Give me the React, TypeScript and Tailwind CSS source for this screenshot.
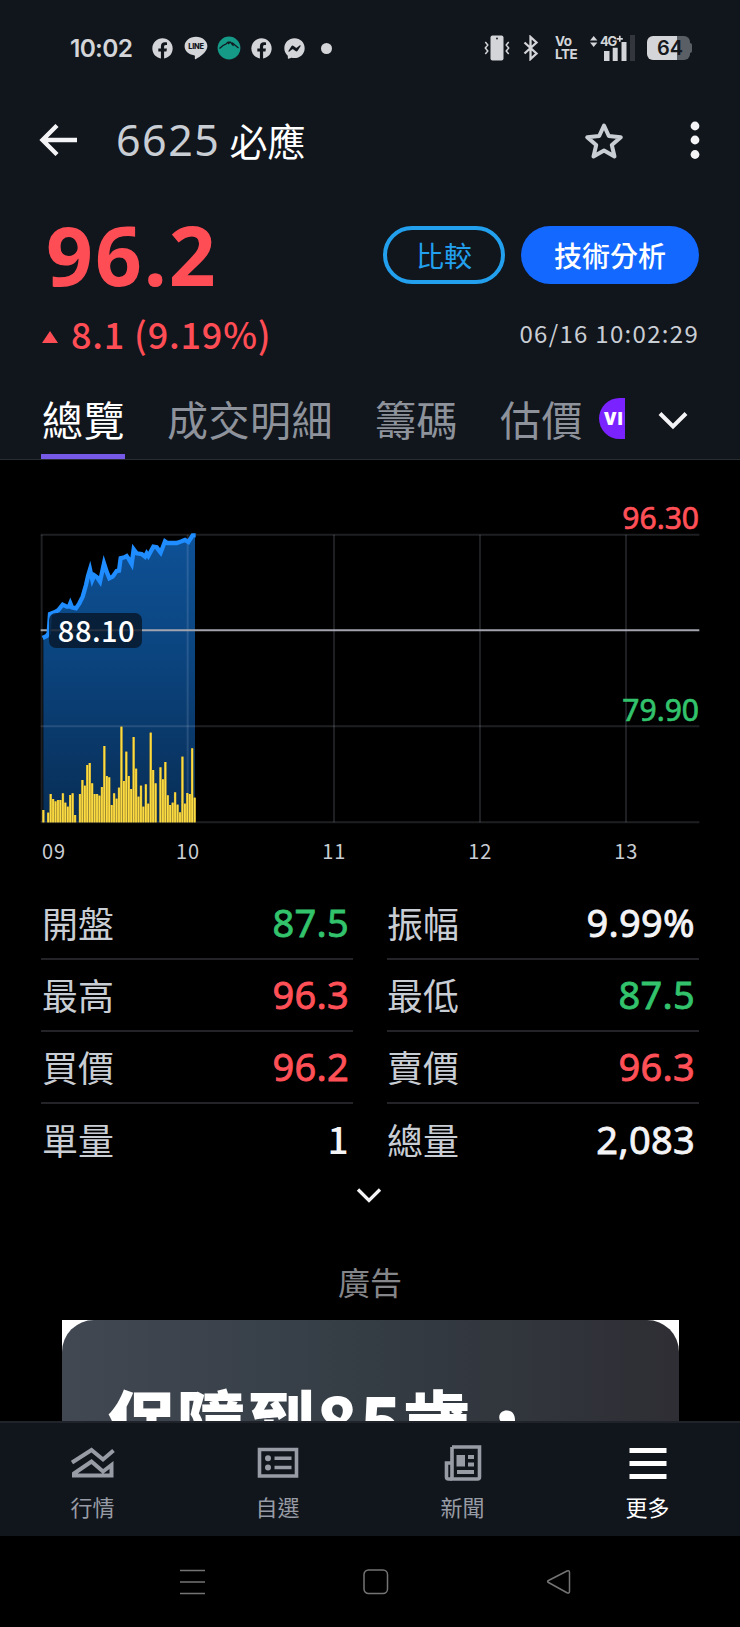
import { FaFacebook, FaFacebookMessenger } from 'react-icons/fa';

const NUM = "font-['Noto_Sans','Noto_Sans_CJK_TC',sans-serif]";

type Tone = 'up' | 'down' | 'flat';

const TONES: Record<Tone, string> = {
  up: 'text-[#ff5058]',
  down: 'text-[#32c36c]',
  flat: 'text-[#f4f4f6]',
};

const QUOTES: { label: string; value: string; tone: Tone }[][] = [
  [
    { label: '開盤', value: '87.5', tone: 'down' },
    { label: '最高', value: '96.3', tone: 'up' },
    { label: '買價', value: '96.2', tone: 'up' },
    { label: '單量', value: '1', tone: 'flat' },
  ],
  [
    { label: '振幅', value: '9.99%', tone: 'flat' },
    { label: '最低', value: '87.5', tone: 'down' },
    { label: '賣價', value: '96.3', tone: 'up' },
    { label: '總量', value: '2,083', tone: 'flat' },
  ],
];

// one point per move, chart units (3 per pixel)
const PRICE_LINE =
  '38,414 50,408 56,400 60,342 75,336 85,330 98,314 110,320 117,320 121,310 126,322 138,325 148,310 158,290 168,255 174,228 180,208 187,240 193,226 201,232 210,245 222,190 230,215 238,235 248,230 260,213 267,212 272,175 283,172 290,168 297,178 305,192 311,148 320,160 335,162 345,170 350,160 355,168 370,140 380,142 392,158 405,124 412,129 440,129 455,124 465,120 475,126 488,106 497,106';

// volume per minute from 09:00, 0 = no trade
const VOLUMES = [
  37, 0, 29, 85, 70, 63, 67, 67, 87, 59, 47, 82, 87, 22, 0, 85, 127, 110, 172, 178, 117, 85, 85, 80, 106, 229, 139,
  135, 52, 87, 71, 104, 287, 124, 212, 139, 100, 256, 161, 77, 110, 47, 114, 56, 269, 157, 117, 0, 165, 129, 181, 81,
  52, 59, 90, 53, 30, 197, 56, 88, 85, 222, 74,
];

const HOURS = [
  { label: '09', x: 35 },
  { label: '10', x: 473 },
  { label: '11', x: 912 },
  { label: '12', x: 1350 },
  { label: '13', x: 1788 },
];

function StatusBar() {
  return (
    <div className="flex h-[96px] items-center justify-between pl-[70px] pr-[48px] text-[#d4d5d8]">
      <div className="flex items-center">
        <span className="w-[82px] font-['Inter',sans-serif] text-[24.5px] font-semibold leading-none tracking-[-0.7px]">
          10:02
        </span>
        <FaFacebook className="size-[21px]" />
        <svg viewBox="0 0 24 24" className="ml-[11px] size-[24px]">
          <path
            d="M12 .8C5.700.8.6 5 .6 10.200c0 4.600 4 8.300 9.400 9 1.100.2 1 .8.800 3.200 0 .8.500 1 1.200.5 3.700-2 11.400-7 11.400-12.700C23.400 5 18.300.8 12 .8z"
            fill="currentColor"
          />
          <text x="12" y="13" textAnchor="middle" fontSize="7.4" fontWeight="800" fontFamily="Inter, sans-serif" letterSpacing="-0.2" fill="#11151c">
            LINE
          </text>
        </svg>
        <svg viewBox="0 0 24 24" className="ml-[9px] size-[24px]">
          <circle cx="12" cy="12" r="11.4" fill="#159a88" />
          <path
            d="M2.500 12.500 6 9.500 9 8l2-2 2.500.2 3 3.800M13 6.200l-2 1.800M14 8l1.500-1 6 5"
            fill="none"
            stroke="#11151c"
            strokeWidth="1.2"
          />
        </svg>
        <FaFacebook className="ml-[10px] size-[21px]" />
        <FaFacebookMessenger className="ml-[12px] size-[21px]" />
        <span className="ml-[16px] size-[11px] rounded-full bg-current" />
      </div>
      <div className="flex items-center">
        <svg viewBox="0 0 26 26" className="size-[26px]">
          <rect x="6.5" y="0.5" width="13" height="25" rx="2" fill="currentColor" />
          <circle cx="13" cy="3.5" r="0.9" fill="#11151c" />
          <path
            d="m1.300 7 2.500 3-2.500 3 2.500 3-2.500 3M24.700 7l-2.500 3 2.500 3-2.500 3 2.500 3"
            fill="none"
            stroke="currentColor"
            strokeWidth="1.5"
          />
        </svg>
        <svg viewBox="0 0 16 26" className="ml-[13px] h-[26px] w-[16px]">
          <path d="m1.500 7.500 12 11-6 5.500V2l6 5.500-12 11" fill="none" stroke="currentColor" strokeWidth="2.3" />
        </svg>
        <div className="ml-[16px] w-[23px] font-['Inter',sans-serif] text-[13.5px] font-bold leading-[13px] tracking-[-0.5px]">
          <div>Vo</div>
          <div>LTE</div>
        </div>
        <svg viewBox="0 0 46 26" className="ml-[12px] h-[26px] w-[46px] overflow-visible">
          <path d="m0 5.500 3.700-4.500 3.700 4.500zM0 7.500h7.400L3.700 12z" fill="currentColor" />
          <text x="10" y="11" fontSize="13" fontWeight="700" fontFamily="Inter, sans-serif" letterSpacing="-1.2" fill="currentColor">
            4G
          </text>
          <path d="M26.800 3.800h6M29.800.8v6" stroke="currentColor" strokeWidth="1.7" />
          <path d="M14 16h5.500v10H14zM22.700 12.800h5v13.200h-5zM31.500 7h5v19h-5z" fill="currentColor" />
          <path d="M40 0h5v26h-5z" fill="#33373d" />
        </svg>
        <div className="relative ml-[11px] flex h-[24px] w-[45px] items-center">
          <div className="h-[24px] w-[43px] rounded-[6px] bg-linear-to-r from-[#d4d5d8] from-70% to-[#5a5e65] to-70%" />
          <div className="h-[10px] w-[2px] rounded-r bg-[#5a5e65]" />
          <span className="absolute left-[10px] top-[2px] font-['Inter',sans-serif] text-[20px] font-semibold leading-[21px] text-[#15181d]">
            64
          </span>
        </div>
      </div>
    </div>
  );
}

function TitleBar() {
  return (
    <div className="flex h-[88px] items-center pl-[39px] pr-[40px]">
      <svg viewBox="0 0 38 32" className="h-[32px] w-[38px]">
        <path d="M18 1.500 3.500 16 18 30.500M3.500 16H38" fill="none" stroke="#f4f4f6" strokeWidth="4.4" />
      </svg>
      <h1 className="-mt-[2px] ml-[39px] flex flex-1 items-baseline gap-[9px] leading-none text-white">
        <span className={`${NUM} text-[43px] tracking-[1.5px] text-[#c9cdd4]`}>6625</span>
        <span className="text-[38px]">必應</span>
      </h1>
      <svg viewBox="0 0 40 40" className="mt-[2px] size-[40px]">
        <path
          d="M20 4.500 24.800 15 36.800 16.200 27.800 24 30.500 35.500 20 29.500 9.500 35.500 12.200 24 3.200 16.200 15.200 15z"
          fill="none"
          stroke="#c9cdd4"
          strokeWidth="4"
          strokeLinejoin="round"
        />
      </svg>
      <svg viewBox="0 0 10 38" className="ml-[66px] h-[38px] w-[10px] fill-[#f4f4f6]">
        <circle cx="5" cy="5" r="4.4" />
        <circle cx="5" cy="19" r="4.4" />
        <circle cx="5" cy="33.500" r="4.4" />
      </svg>
    </div>
  );
}

function PriceHeader() {
  return (
    <div className="flex h-[196px] justify-between pl-[42px] pr-[41px] pt-[42px]">
      <div className="text-[#ff4d55]">
        <div className={`${NUM} -mt-[3px] pl-[4px] text-[82px] font-bold leading-[62px] tracking-[2px]`}>96.2</div>
        <div className="mt-[25px] flex items-center gap-[13px]">
          <svg viewBox="0 0 16 12" className="mt-[7px] h-[12px] w-[16px] fill-current">
            <path d="m8 0 8 12H0z" />
          </svg>
          <span className="text-[36px] font-medium leading-[46px] tracking-[0.8px]">8.1 (9.19%)</span>
        </div>
      </div>
      <div className="flex flex-col items-end">
        <div className="flex gap-[16px]">
          <button className="h-[58px] w-[122px] rounded-full border-4 border-[#22a0ee] text-[28px] leading-none text-[#22a0ee]">
            比較
          </button>
          <button className="h-[58px] w-[178px] rounded-full bg-[#1268ff] text-[28px] font-medium leading-none text-white">
            技術分析
          </button>
        </div>
        <span className="mt-[31px] text-[24px] leading-[36px] tracking-[1.3px] text-[#c9cdd4]">06/16 10:02:29</span>
      </div>
    </div>
  );
}

function Tabs() {
  return (
    <nav className="flex h-[80px] border-b border-[#2a2d31] pl-[41px]">
      <div className="flex w-[584px] gap-[42px] overflow-hidden whitespace-nowrap text-[41px] leading-[76px] tracking-[0.5px] text-[#8d929b]">
        <div className="h-[79px] border-b-5 border-[#7759e8] pl-px text-white">總覽</div>
        <div>成交明細</div>
        <div>籌碼</div>
        <div className="flex h-[76px] items-center gap-[16px]">
          估價
          <span className="flex h-[41px] w-[64px] shrink-0 items-center rounded-full bg-[#7a22ff] pl-[5px] font-['Open_Sans',sans-serif] text-[18px] font-extrabold leading-none text-white">
            VIP
          </span>
        </div>
      </div>
      <svg viewBox="0 0 30 20" className="ml-[33px] mt-[31px] h-[20px] w-[30px]">
        <path d="m2 2.500 13 13 13-13" fill="none" stroke="#f4f4f6" strokeWidth="4" />
      </svg>
    </nav>
  );
}

function IntradayChart() {
  return (
    <section className="relative h-[388px] pl-[30px] pt-[40px]">
      <svg viewBox="0 0 2010 1110" className="h-[370px] w-[670px]">
        <defs>
          <linearGradient id="area" x1="0" y1="0" x2="0" y2="1">
            <stop offset="0" stopColor="#0e5196" />
            <stop offset="0.4" stopColor="#0b4580" />
            <stop offset="1" stopColor="#082d55" />
          </linearGradient>
        </defs>
        <polygon points={`40,967 40,414 ${PRICE_LINE} 495,106 495,967`} fill="url(#area)" />
        <g stroke="#d5dcf0" strokeOpacity="0.14" strokeWidth="6">
          {HOURS.map(h => (
            <path key={h.label} d={`M${h.x} 104V967`} />
          ))}
          <path d="M32 104H2008M32 679H2008M32 967H2008" />
        </g>
        {VOLUMES.map((v, i) => (
          <g key={i}>
            <rect x={36.5 + i * 7.32} y={967 - v} width="7.3" height={v} fill="#b5942a" />
            <rect x={37.5 + i * 7.32} y={967 - v} width="5" height={v} fill="#fbdc42" />
          </g>
        ))}
        <path d="M32 391H2008" stroke="#a3a5ae" strokeWidth="6" />
        <polyline points={PRICE_LINE} fill="none" stroke="#1f8dff" strokeWidth="13" strokeLinejoin="miter" />
        <g fontSize="60" fill="#c9cdd4" letterSpacing="3" fontFamily="Noto Sans CJK TC, sans-serif">
          {HOURS.map((h, i) => (
            <text key={h.label} x={h.x + 1} y="1077" textAnchor={i === 0 ? 'start' : 'middle'}>
              {h.label}
            </text>
          ))}
        </g>
      </svg>
      <span
        className={`${NUM} absolute right-[41px] top-[38px] text-[30px] leading-[40px] text-[#ff5058] [-webkit-text-stroke:0.7px]`}
      >
        96.30
      </span>
      <span
        className={`${NUM} absolute right-[41px] top-[230px] text-[30px] leading-[40px] text-[#32c36c] [-webkit-text-stroke:0.7px]`}
      >
        79.90
      </span>
      <span className="absolute left-[49px] top-[153px] h-[35px] w-[93px] rounded-[7px] bg-[#061526]/80 pl-[2px] text-center text-[29px] font-medium leading-[32px] tracking-[0.5px] text-white">
        88.10
      </span>
    </section>
  );
}

function QuoteTable() {
  return (
    <section className="flex gap-[34px] px-[41px] pt-[40px]">
      {QUOTES.map((column, c) => (
        <div key={c} className="flex-1">
          {column.map((row, i) => (
            <div
              key={row.label}
              className={`flex h-[72px] items-center justify-between pb-[2px] pr-[4px] ${i < 3 ? 'border-b-2 border-[#242428]' : ''}`}
            >
              <span className={`text-[36px] leading-none text-[#c9cdd4] ${c === 0 ? 'pl-px' : ''}`}>{row.label}</span>
              <span
                className={`${row.value === '1' ? '-mt-[2px] text-[37px] font-medium' : `${NUM} text-[38px] [-webkit-text-stroke:0.8px]`} leading-none tracking-[0.3px] ${TONES[row.tone]}`}
              >
                {row.value}
              </span>
            </div>
          ))}
        </div>
      ))}
    </section>
  );
}

function AdBanner() {
  return (
    <section className="flex flex-1 flex-col items-center overflow-hidden">
      <svg viewBox="0 0 26 18" className="mr-[2px] mt-[11px] h-[18px] w-[26px] shrink-0">
        <path d="m2 2.500 11 11 11-11" fill="none" stroke="#f4f4f6" strokeWidth="3.3" />
      </svg>
      <span className="mt-[52px] text-[32px] leading-[48px] text-[#85868a]">廣告</span>
      <div className="mt-[15px] h-[300px] w-[617px] shrink-0 bg-white">
        <div className="h-full rounded-t-[32px] bg-linear-to-r from-[#414852] via-[#343c44] to-[#2e2e34] pl-[46px] pt-[54px] text-[68px] font-black leading-[90px] tracking-[1.7px] text-white">
          保障到85歲，
        </div>
      </div>
    </section>
  );
}

function BottomNav() {
  return (
    <nav className="grid h-[115px] shrink-0 grid-cols-4 border-t-2 border-[#20242a] bg-[#11151c] text-[22px] leading-[32px] text-[#989ca5]">
      <div className="flex flex-col items-center pt-[21px]">
        <svg viewBox="0 0 44 40" className="mb-[6px] h-[40px] w-[44px] fill-none stroke-current stroke-[4]">
          <path d="m1 18.500 19.500-12.500L32 15.500 42.500 6.500" />
          <path d="M3 29.500 20.500 17.500 32 27.500l8.500-6.500v10.500H3z" />
        </svg>
        行情
      </div>
      <div className="flex flex-col items-center pt-[21px]">
        <svg viewBox="0 0 44 40" className="mb-[6px] h-[40px] w-[44px] fill-none stroke-current stroke-[3.6]">
          <path d="M3.500 5.500h37v26.500h-37zM18.500 14.300h17M18.500 23.500h17" />
          <g className="fill-current stroke-none">
            <circle cx="12" cy="14.300" r="3" />
            <circle cx="12" cy="23.500" r="3" />
          </g>
        </svg>
        自選
      </div>
      <div className="flex flex-col items-center pt-[21px]">
        <svg viewBox="0 0 44 40" className="mb-[6px] h-[40px] w-[44px] fill-none stroke-current stroke-[3.6]">
          <path d="M11 3h27.500v30q0 2-2 2h-29q-2 0-2-2V19H11" />
          <path d="M11 3v30q0 2-2 2" />
          <path
            d="M15.500 11h8.500v11.500h-8.500zM27 11h6v4h-6zM27 18.500h6v4h-6zM16 26h17v4H16z"
            className="fill-current stroke-none"
          />
        </svg>
        新聞
      </div>
      <div className="flex flex-col items-center pt-[21px] text-white">
        <svg viewBox="0 0 44 40" className="mb-[6px] h-[40px] w-[44px] fill-none stroke-current stroke-[5]">
          <path d="M3.500 6.500h37M3.500 19.500h37M3.500 32.500h37" />
        </svg>
        更多
      </div>
    </nav>
  );
}

function SystemNav() {
  return (
    <div className="flex h-[91px] shrink-0 items-center justify-between pl-[180px] pr-[169px]">
      <svg viewBox="0 0 25 26" className="h-[26px] w-[25px] fill-none stroke-[#747474] stroke-[1.5]">
        <path d="M0 1.500h25M0 13h25M0 24.500h25" />
      </svg>
      <svg viewBox="0 0 26 26" className="h-[26px] w-[26px] fill-none stroke-[#747474] stroke-[1.5]">
        <rect x="1" y="1" width="23.500" height="23.500" rx="4.500" />
      </svg>
      <svg viewBox="0 0 25 26" className="h-[26px] w-[25px] fill-none stroke-[#747474] stroke-[1.5]">
        <path d="M21 2 2.500 11.500q-1.800 1 0 2L21 23.700q2.500 1 2.500-1.500V3.500Q23.500 1 21 2z" />
      </svg>
    </div>
  );
}

export default function App() {
  return (
    <div className="flex h-[1627px] w-[740px] flex-col overflow-hidden bg-black font-['Noto_Sans_CJK_TC',sans-serif]">
      <header className="bg-[#11151c]">
        <StatusBar />
        <TitleBar />
        <PriceHeader />
        <Tabs />
      </header>
      <IntradayChart />
      <QuoteTable />
      <AdBanner />
      <BottomNav />
      <SystemNav />
    </div>
  );
}
